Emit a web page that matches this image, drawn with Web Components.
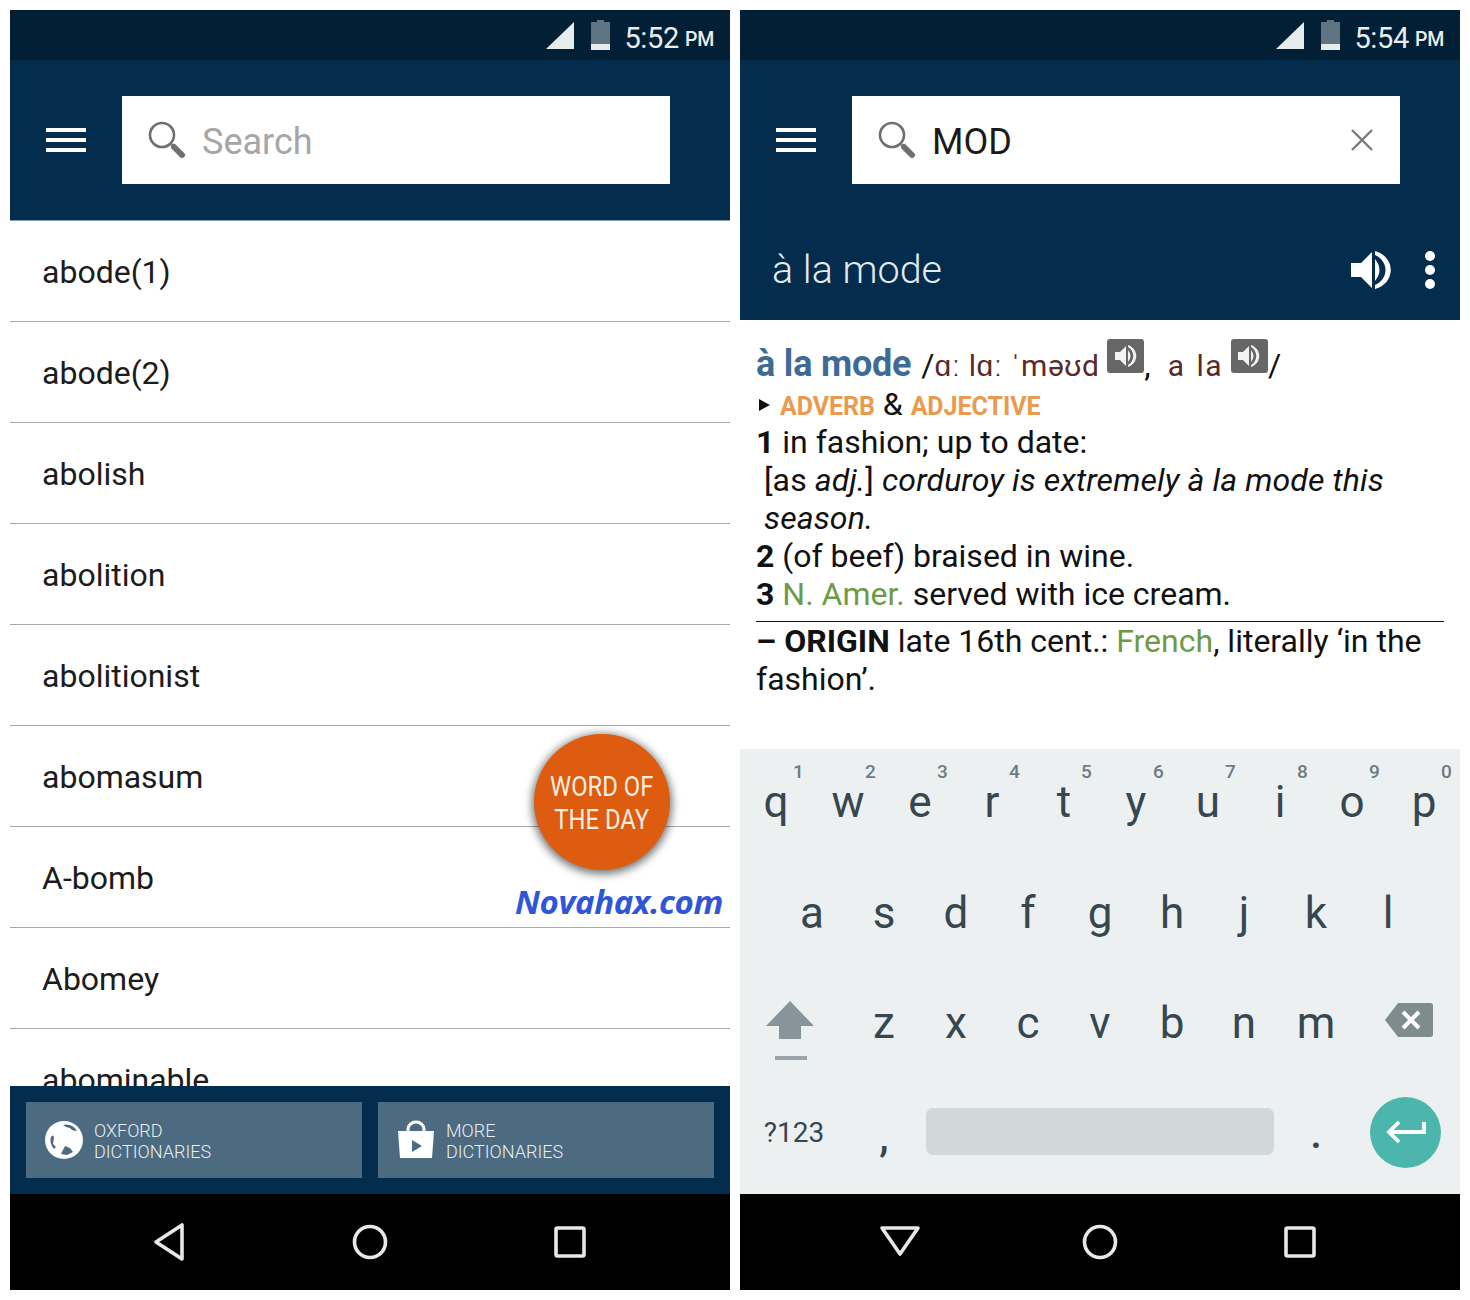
<!DOCTYPE html>
<html>
<head>
<meta charset="utf-8">
<style>
  body { margin: 0; background: #fff; font-family: Roboto, "Liberation Sans", sans-serif; }
  .screens { display: grid; grid-template-columns: 720px 720px; gap: 10px; padding: 10px; }
</style>
</head>
<body>
<div class="screens">
  <dict-phone>
    <status-bar time="5:52"></status-bar>
    <search-header placeholder="Search"></search-header>
    <word-list>
      <word-row>abode(1)</word-row>
      <word-row>abode(2)</word-row>
      <word-row>abolish</word-row>
      <word-row>abolition</word-row>
      <word-row>abolitionist</word-row>
      <word-row>abomasum</word-row>
      <word-row>A-bomb</word-row>
      <word-row>Abomey</word-row>
      <word-row>abominable</word-row>
    </word-list>
    <bottom-actions>
      <action-tile icon="globe">OXFORD<br>DICTIONARIES</action-tile>
      <action-tile icon="bag">MORE<br>DICTIONARIES</action-tile>
    </bottom-actions>
    <nav-bar back="left"></nav-bar>
    <wotd-badge></wotd-badge>
  </dict-phone>

  <dict-phone>
    <status-bar time="5:54"></status-bar>
    <search-header value="MOD">
      <entry-title>à la mode</entry-title>
    </search-header>
    <entry-view></entry-view>
    <soft-keyboard></soft-keyboard>
    <nav-bar back="down"></nav-bar>
  </dict-phone>
</div>

<script>
customElements.define('dict-phone', class extends HTMLElement {
    constructor() {
        super()
        this.attachShadow({ mode: "open" }).innerHTML = /*html*/`
        <style>
            :host { display: flex; flex-direction: column; height: 1280px; position: relative; background: #fff; overflow: hidden; }
        </style>
        <slot></slot>`
    }
})

customElements.define('status-bar', class extends HTMLElement {
    connectedCallback() {
        this.attachShadow({ mode: "open" }).innerHTML = /*html*/`
        <style>
            :host { display: flex; flex: none; height: 50px; background: #021f35; color: #e8edef; align-items: center; justify-content: flex-end; padding-right: 16px; box-sizing: border-box; }
            .signal { margin-right: 16px; }
            .battery { margin-right: 14px; margin-left: 1px; }
            .time { font-size: 29px; letter-spacing: -.3px; margin-top: 5px; }
            .ampm { font-size: 19.5px; font-weight: 500; margin-left: 6px; margin-top: 8px; letter-spacing: -.3px; }
        </style>
        <svg class="signal" width="29" height="29" viewBox="0 0 29 29"><path d="M29 1v27H1z" fill="#e6ebec"/></svg>
        <svg class="battery" width="19" height="30" viewBox="0 0 19 30">
            <path d="M6 0h7v2h6v28H0V2h6z" fill="#5f7482"/>
            <rect y="24" width="19" height="6" fill="#e6ebec"/>
        </svg>
        <span class="time">${this.getAttribute('time')}</span><span class="ampm">PM</span>`
    }
})

customElements.define('search-header', class extends HTMLElement {
    connectedCallback() {
        const value = this.getAttribute('value')
        const text = value || this.getAttribute('placeholder')
        this.attachShadow({ mode: "open" }).innerHTML = /*html*/`
        <style>
            :host { display: block; flex: none; background: #032c4d; }
            .top { display: flex; align-items: center; height: 160px; box-sizing: border-box; padding: 36px 60px 36px 36px; }
            .menu { width: 40px; margin-right: 36px; display: grid; gap: 6px; }
            .menu i { display: block; height: 4px; background: #fff; }
            .box { flex: 1; height: 88px; background: #fff; display: flex; align-items: center; padding: 0 26px; box-sizing: border-box; }
            .text { font-size: 36px; margin: 3px 0 0 16px; flex: 1; color: ${value ? '#1a1a1a' : '#a6a6a6'}; }
            .close { display: ${value ? 'block' : 'none'}; }
        </style>
        <div class="top">
            <div class="menu"><i></i><i></i><i></i></div>
            <div class="box">
                <svg width="38" height="38" viewBox="0 0 38 38" fill="none">
                    <circle cx="14" cy="14" r="12" stroke="#6f6f6f" stroke-width="2.6"/>
                    <path d="M23 23l4 4" stroke="#8a8a8a" stroke-width="2.6"/>
                    <path d="M26 26l8 8" stroke="#6f6f6f" stroke-width="6" stroke-linecap="round"/>
                </svg>
                <span class="text">${text}</span>
                <svg class="close" width="24" height="24" viewBox="0 0 24 24"><path d="M2 2l20 20M22 2L2 22" stroke="#7a7a7a" stroke-width="2.4"/></svg>
            </div>
        </div>
        <slot></slot>`
    }
})

customElements.define('entry-title', class extends HTMLElement {
    connectedCallback() {
        this.attachShadow({ mode: "open" }).innerHTML = /*html*/`
        <style>
            :host { display: flex; align-items: center; height: 100px; padding: 0 25px 0 32px; color: #e4eaee; font-size: 39.5px; font-weight: 300; }
            .t { flex: 1; margin-top: -2px; }
            .dots { display: grid; gap: 4px; margin-left: 34px; margin-top: -1px; }
            .dots i { width: 10px; height: 10px; border-radius: 50%; background: #fff; display: block; }
        </style>
        <span class="t"><slot></slot></span>
        <svg width="40" height="38" viewBox="0 0 40 38">
            <path d="M0 12h10L21 1v36L10 26H0z" fill="#fff"/>
            <path d="M24 8q9 11 0 22z" fill="#fff"/>
            <path d="M24 0C45 6 45 32 24 38v-4C38 28 38 10 24 4z" fill="#fff"/>
        </svg>
        <div class="dots"><i></i><i></i><i></i></div>`
    }
})

customElements.define('word-list', class extends HTMLElement {
    constructor() {
        super()
        this.attachShadow({ mode: "open" }).innerHTML = /*html*/`
        <style>
            :host { display: block; flex: 1; min-height: 0; overflow: hidden; border-top: 1px solid #7f9db3; }
        </style>
        <slot></slot>`
    }
})

customElements.define('word-row', class extends HTMLElement {
    constructor() {
        super()
        this.attachShadow({ mode: "open" }).innerHTML = /*html*/`
        <style>
            :host { display: flex; align-items: center; height: 101px; box-sizing: border-box; padding: 2px 32px 0; border-bottom: 1px solid #a8a8a8; font-size: 32px; color: #1c1c1c; }
        </style>
        <slot></slot>`
    }
})

customElements.define('bottom-actions', class extends HTMLElement {
    constructor() {
        super()
        this.attachShadow({ mode: "open" }).innerHTML = /*html*/`
        <style>
            :host { display: grid; flex: none; grid-template-columns: 1fr 1fr; gap: 16px; padding: 16px; height: 108px; box-sizing: border-box; background: #032c4d; }
        </style>
        <slot></slot>`
    }
})

customElements.define('action-tile', class extends HTMLElement {
    connectedCallback() {
        const globe = /*html*/`
        <svg width="40" height="40" viewBox="0 0 40 40">
            <circle cx="20" cy="20" r="19" fill="#fff"/>
            <path d="M19 5q9-2 14 6-5 0-7-3-4 0-7-3z" fill="#4c6b80"/>
            <path d="M7 17q2-3 3 0l-1 7 3 3-2 2q-5-6-3-12z" fill="#4c6b80"/>
            <path d="M17 34l4-8 5 2 3 4-6 3z" fill="#4c6b80"/>
        </svg>`
        const bag = /*html*/`
        <svg width="40" height="40" viewBox="0 0 40 40">
            <path d="M12 12V9a8 7 0 0 1 16 0v3" fill="none" stroke="#fff" stroke-width="3"/>
            <path d="M2 11h36l-2 27H4z" fill="#fff"/>
            <path d="M16 20l10 6-10 6z" fill="#4c6b80"/>
        </svg>`
        this.attachShadow({ mode: "open" }).innerHTML = /*html*/`
        <style>
            :host { display: flex; align-items: center; gap: 10px; padding-left: 18px; background: #4c6b80; color: #e8eef1; font-size: 18px; font-weight: 300; line-height: 21px; }
            svg { flex: none; }
            div { padding-top: 2px; }
        </style>
        ${this.getAttribute('icon') == 'globe' ? globe : bag}
        <div><slot></slot></div>`
    }
})

customElements.define('nav-bar', class extends HTMLElement {
    connectedCallback() {
        const back = this.getAttribute('back') == 'down'
            ? '<path d="M3 7h36L21 33z"/>'
            : '<path d="M33 4v34L7 21z"/>'
        this.attachShadow({ mode: "open" }).innerHTML = /*html*/`
        <style>
            :host { display: grid; flex: none; grid-template-columns: repeat(3, 1fr); height: 96px; padding: 0 60px; background: #000; place-items: center; }
            svg { fill: none; stroke: #e8e8e8; stroke-width: 3.6; stroke-linejoin: round; }
        </style>
        <svg width="42" height="42" viewBox="0 0 42 42">${back}</svg>
        <svg width="36" height="36" viewBox="0 0 36 36"><circle cx="18" cy="18" r="15.5"/></svg>
        <svg width="34" height="34" viewBox="0 0 34 34"><rect x="3" y="3" width="28" height="28" rx="1.5"/></svg>`
    }
})

customElements.define('wotd-badge', class extends HTMLElement {
    constructor() {
        super()
        this.attachShadow({ mode: "open" }).innerHTML = /*html*/`
        <style>
            .round { position: absolute; left: 524px; top: 724px; width: 136px; height: 136px; border-radius: 50%; background: #dd5c10; color: #fbeee0; box-shadow: 0 2px 9px 2px rgba(0,0,0,.55); display: flex; align-items: center; justify-content: center; text-align: center; font-size: 28px; line-height: 33px; }
            .round span { display: block; margin-top: 2px; transform: scaleX(.85); white-space: nowrap; }
            .mark { position: absolute; left: 505px; top: 869px; color: #2f56d9; font: italic 700 33px "Open Sans", sans-serif; letter-spacing: -.4px; }
        </style>
        <div class="round"><span>WORD OF<br>THE DAY</span></div>
        <div class="mark">Novahax.com</div>`
    }
})

customElements.define('say-chip', class extends HTMLElement {
    constructor() {
        super()
        this.attachShadow({ mode: "open" }).innerHTML = /*html*/`
        <style>
            :host { display: inline-flex; width: 37px; height: 34px; border-radius: 3px; background: #666; align-items: center; justify-content: center; vertical-align: 8px; }
        </style>
        <svg width="24" height="24" viewBox="0 0 24 24">
            <path d="M1 8h5l6-6v20l-6-6H1z" fill="#f2f2f2"/>
            <path d="M14 6q5 6 0 12z" fill="#f2f2f2"/>
            <path d="M14 1C25 5 25 19 14 23v-2C21 17 21 7 14 3z" fill="#f2f2f2"/>
        </svg>`
    }
})

customElements.define('entry-view', class extends HTMLElement {
    constructor() {
        super()
        this.attachShadow({ mode: "open" }).innerHTML = /*html*/`
        <style>
            :host { display: block; flex: 1; min-height: 0; padding: 19px 16px 0; font-size: 32px; line-height: 38px; color: #111; }
            .head { height: 46px; white-space: pre; }
            .hw { color: #3e6a94; font-weight: 700; font-size: 36px; margin-right: 2px; letter-spacing: -.2px; }
            .ipa { color: #5a2a2a; font-size: 30px; letter-spacing: .55px; }
            .ipa.wide { letter-spacing: 1.5px; word-spacing: 2px; margin-left: 17px; }
            .pos { height: 38px; white-space: nowrap; }
            .pos b { color: #ea9a4e; font-size: 25px; letter-spacing: -.05px; }
            .tri { display: inline-block; border-left: 11px solid #111; border-top: 6px solid transparent; border-bottom: 6px solid transparent; margin: 0 10px 0 3px; vertical-align: 4px; }
            .amp { font-size: 32px; }
            .ex { padding-left: 8px; letter-spacing: .12px; }
            .reg { color: #6f9a45; }
            .origin { border-top: 1px solid #111; margin-top: 8px; }
            b { font-weight: 700; }
        </style>
        <div class="head"><span class="hw">à la mode</span> /<span class="ipa">ɑː lɑː ˈməʊd</span> <say-chip></say-chip>,<span class="ipa wide">a la</span> <say-chip></say-chip>/</div>
        <div class="pos"><span class="tri"></span><b>ADVERB</b> <span class="amp">&amp;</span> <b>ADJECTIVE</b></div>
        <div><b>1</b> in fashion; up to date:</div>
        <div class="ex">[as <i>adj.</i>] <i>corduroy is extremely à la mode this season.</i></div>
        <div><b>2</b> (of beef) braised in wine.</div>
        <div><b>3</b> <span class="reg">N. Amer.</span> served with ice cream.</div>
        <div class="origin"><b>– ORIGIN</b> late 16th cent.: <span class="reg">French</span>, literally ‘in the fashion’.</div>`
    }
})

customElements.define('key-cap', class extends HTMLElement {
    connectedCallback() {
        const num = this.getAttribute('num')
        this.attachShadow({ mode: "open" }).innerHTML = /*html*/`
        <style>
            :host { display: flex; align-items: center; justify-content: center; position: relative; color: #37474f; font-size: 44px; }
            .num { position: absolute; left: 50%; margin-left: 17px; top: 11px; font-size: 19px; font-weight: 500; color: #6d7c84; }
        </style>
        <slot></slot>
        ${num ? `<span class="num">${num}</span>` : ''}`
    }
})

customElements.define('soft-keyboard', class extends HTMLElement {
    constructor() {
        super()
        const keys = s => [...s].map(c => `<key-cap>${c}</key-cap>`).join('')
        const top = [...'qwertyuiop'].map((c, i) => `<key-cap num="${(i + 1) % 10}"><span class="l">${c}</span></key-cap>`).join('')
        this.attachShadow({ mode: "open" }).innerHTML = /*html*/`
        <style>
            :host { display: block; flex: none; height: 445px; background: #ecf0f1; }
            .row { display: grid; grid-template-columns: repeat(20, 36px); height: 109.5px; }
            .row key-cap { grid-column: span 2; }
            .row key-cap.wide { grid-column: span 3; }
            .row key-cap.space { grid-column: span 10; }
            .row .pad { grid-column: span 1; }
            .l { margin-top: -3px; }
            .s { font-size: 28px; margin-top: 1px; }
            .p { font-size: 42px; font-weight: 500; }
            .bar { width: 348px; height: 47px; border-radius: 7px; background: #d1d8d8; margin-top: -1px; }
            .enter { width: 71px; height: 71px; border-radius: 50%; background: #4db6ac; display: flex; align-items: center; justify-content: center; margin-left: -1px; }
            .shift { display: flex; flex-direction: column; align-items: center; gap: 17px; margin-left: -8px; margin-top: 16px; }
            .shift i { display: block; width: 32px; height: 4px; background: #9aa5a9; margin-left: 2px; }
            svg { display: block; }
        </style>
        <div class="row">${top}</div>
        <div class="row"><span class="pad"></span>${keys('asdfghjkl')}</div>
        <div class="row">
            <key-cap class="wide"><div class="shift">
                <svg width="48" height="38" viewBox="0 0 48 38"><path d="M24 0l24 25H35v13H13V25H0z" fill="#87959b"/></svg>
                <i></i>
            </div></key-cap>
            ${keys('zxcvbnm')}
            <key-cap class="wide"><svg width="48" height="36" viewBox="0 0 48 36" style="margin-left:6px;margin-top:-6px">
                <path d="M13 1h32a3 3 0 0 1 3 3v28a3 3 0 0 1-3 3H13L0 18z" fill="#7f8c8d"/>
                <path d="M18 10l16 16M34 10L18 26" stroke="#fff" stroke-width="4"/>
            </svg></key-cap>
        </div>
        <div class="row">
            <key-cap class="wide"><span class="s">?123</span></key-cap>
            <key-cap><span class="p" style="margin-top:8px">,</span></key-cap>
            <key-cap class="space"><div class="bar"></div></key-cap>
            <key-cap><span class="p" style="margin-top:2px">.</span></key-cap>
            <key-cap class="wide"><div class="enter">
                <svg width="40" height="24" viewBox="0 0 40 24" fill="none"><path d="M38 2v10H4M13 2L3 12l10 10" stroke="#fff" stroke-width="3.8"/></svg>
            </div></key-cap>
        </div>`
    }
})
</script>
</body>
</html>
